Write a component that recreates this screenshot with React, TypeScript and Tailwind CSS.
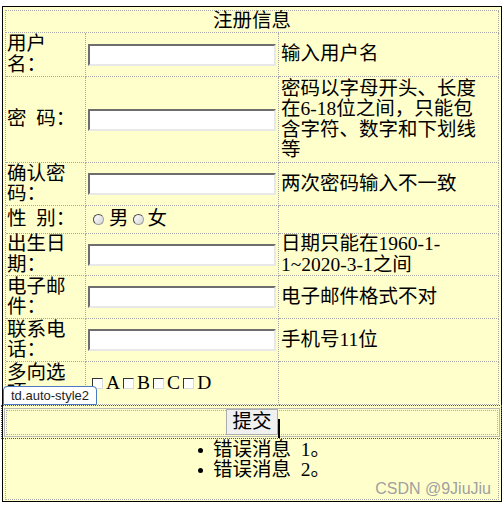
const cell = 'border-r border-b border-dotted border-[#a8a8a8] flex items-center';

function TextBox() {
  return (
    <input
      type="text"
      className="ml-[2px] w-[188px] h-[22px] bg-white border-2 border-t-[#6e6e6e] border-l-[#6e6e6e] border-r-[#e8e8e8] border-b-[#e8e8e8] outline-none"
    />
  );
}

function Radio() {
  return (
    <span className="inline-block w-[11px] h-[11px] rounded-full border border-[#a0a0a0] border-t-[#4a4a4a] border-l-[#4a4a4a] bg-linear-to-br from-white to-[#d6d6d6]" />
  );
}

function Check() {
  return (
    <span className="inline-block w-[11px] h-[11px] border border-t-[#333333] border-l-[#333333] border-r-[#dcdcdc] border-b-[#dcdcdc] bg-white" />
  );
}

function Label({ children }: { children: React.ReactNode }) {
  return <div className={`${cell} pl-[1px] pr-[4px]`}>{children}</div>;
}

function Hint({ children }: { children?: React.ReactNode }) {
  return (
    <div className={`${cell} pl-[2px]`}>
      <div className="w-[203px]">{children}</div>
    </div>
  );
}

export default function App() {
  return (
    <div className="relative mt-[6px] ml-[2px] w-[500px] h-[496px] border border-black bg-[#ffffcc] pt-[3px] pb-[1px] px-[2px] flex flex-col font-['Liberation_Serif','Noto_Sans_CJK_SC',serif] text-[19.5px] leading-[20.5px] text-black">
      <div className="grid grid-cols-[80px_193px_220px] grid-rows-[22px_44px_86px_43px_28px_42px_43px_43px_43px] border-l border-t border-dotted border-[#a8a8a8]">
        <div className={`${cell} col-span-3 justify-center`}>注册信息</div>

        <Label>用户名：</Label>
        <div className={cell}><TextBox /></div>
        <Hint>输入用户名</Hint>

        <Label>密&nbsp;&nbsp;码：</Label>
        <div className={cell}><TextBox /></div>
        <Hint>密码以字母开头、长度在6-18位之间，只能包含字符、数字和下划线等</Hint>

        <Label>确认密码：</Label>
        <div className={cell}><TextBox /></div>
        <Hint>两次密码输入不一致</Hint>

        <Label>性&nbsp;&nbsp;别：</Label>
        <div className={cell}>
          <span className="ml-[7px] flex items-center"><Radio /></span>
          <span className="ml-[5px]">男</span>
          <span className="ml-[4px] flex items-center"><Radio /></span>
          <span className="ml-[4px]">女</span>
        </div>
        <Hint />

        <Label>出生日期：</Label>
        <div className={cell}><TextBox /></div>
        <Hint>日期只能在1960-1-<wbr />1~2020-3-1之间</Hint>

        <Label>电子邮件：</Label>
        <div className={cell}><TextBox /></div>
        <Hint>电子邮件格式不对</Hint>

        <Label>联系电话：</Label>
        <div className={cell}><TextBox /></div>
        <Hint>手机号11位</Hint>

        <Label>多向选项：</Label>
        <div className={`${cell} pl-[6px]`}>
          {['A', 'B', 'C', 'D'].map((k, i) => (
            <span key={k} className={`flex items-center ${i > 0 ? 'ml-[3px]' : ''}`}>
              <Check />
              <span className="ml-[3px]">{k}</span>
            </span>
          ))}
        </div>
        <Hint />
      </div>

      {/* selected submit row in the designer */}
      <div className="relative h-[34px] flex items-center justify-center">
        <div className="absolute top-0 bottom-0 -left-[4px] -right-[3px] border border-dotted border-[#2b55b8]" />
        <div className="absolute top-[3px] bottom-[2px] -left-[1px] -right-[1px] border border-[#b8b8b8]" />
        <div className="absolute top-[5px] bottom-[4px] left-[1px] right-[1px] border border-dotted border-[#b0b0b0]" />
        <div className="relative">
          <button type="button" className="h-[26px] px-[5px] border border-[#adadad] bg-[#f0f0f0] leading-[20px]">
            提交
          </button>
          <span className="absolute left-full top-[10px] w-[2px] h-[19px] bg-black" />
        </div>
        <div className="absolute bottom-full left-[-2px] h-[19px] px-[7px] border border-[#4a78c2] rounded-t-[4px] bg-white font-['Liberation_Sans',sans-serif] text-[13px] leading-[17px] text-[#1e1e1e]">
          td.auto-style2
        </div>
      </div>

      <div className="flex-1 border-l border-r border-b border-dotted border-[#a8a8a8] pt-[1px]">
        <ul className="pl-[192px]">
          {['错误消息\u20021。', '错误消息\u20022。'].map((m) => (
            <li key={m} className="flex items-center h-[20px]">
              <span className="w-[5px] h-[5px] rounded-full bg-black mr-[10px]" />
              <span>{m}</span>
            </li>
          ))}
        </ul>
      </div>

      <div className="absolute right-[10px] bottom-[4px] font-['Liberation_Sans',sans-serif] text-[16px] leading-[16px] text-[#a0a0a0]">
        CSDN @9JiuJiu
      </div>
    </div>
  );
}
